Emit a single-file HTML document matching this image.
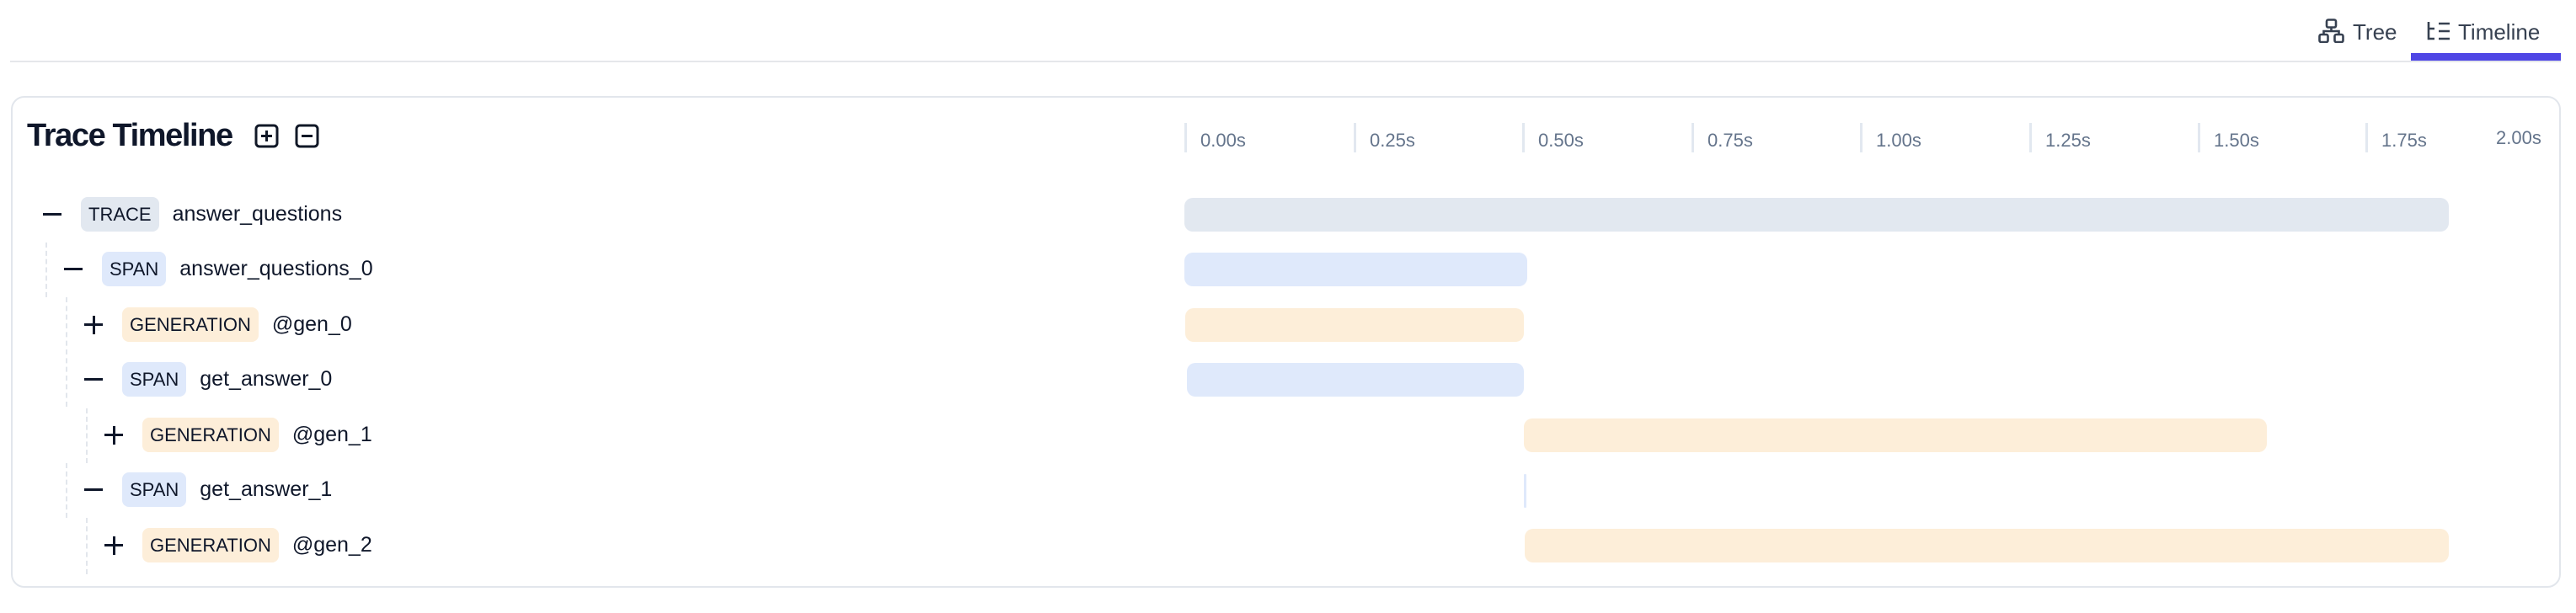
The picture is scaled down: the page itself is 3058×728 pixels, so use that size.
<!DOCTYPE html>
<html><head><meta charset="utf-8"><style>
*{margin:0;padding:0;box-sizing:border-box}
body{width:3058px;height:728px;background:#fff;font-family:"Liberation Sans",Arial,sans-serif;position:relative;overflow:hidden;color:#0f172a}
.a{position:absolute}
.hl{left:12px;width:3028px;top:72px;height:2px;background:#e5e7eb}
.tab{top:21px;font-size:26px;color:#374151;line-height:34px}
.card{left:13px;top:114px;width:3027px;height:584px;border:2px solid #e2e6ec;border-radius:16px}
.title{left:32px;top:140px;font-size:38px;font-weight:bold;letter-spacing:-1.4px;line-height:42px}
.tick{top:146px;width:3px;height:35px;background:#e2e8f0}
.tl{top:155px;font-size:22px;color:#64748b;line-height:24px}
.row{height:41px;display:flex;align-items:center}
.tg{width:22px;height:22px;position:relative;margin-right:23px}
.tg:before{content:"";position:absolute;left:0;top:9.5px;width:22px;height:3px;background:#0f172a}
.tg.p:after{content:"";position:absolute;left:9.5px;top:0;width:3px;height:22px;background:#0f172a}
.bd{height:41px;line-height:41px;font-size:22px;padding:0 9px;border-radius:8px;margin-right:16px}
.tr{background:#e2e8f0}.sp{background:#dfe9fb}.ge{background:#fdeed9}
.nm{font-size:25px}
.bar{height:40px;border-radius:10px}
.dl{width:0;border-left:2px dashed #e2e6ec}
</style></head><body>
<div class="a hl"></div>
<div class="a" style="left:2862px;top:63px;width:178px;height:9px;background:#4f46e5"></div>
<svg class="a" style="left:2752px;top:22px" width="31" height="29" viewBox="0 0 31 29" fill="none" stroke="#374151" stroke-width="2.6"><rect x="10" y="1.5" width="11" height="9" rx="2"/><rect x="1.5" y="19" width="10" height="9" rx="2"/><rect x="19.5" y="19" width="10" height="9" rx="2"/><path d="M15.5 10.5V15M6.5 19V15H24.5V19"/></svg>
<div class="a tab" style="left:2793px">Tree</div>
<svg class="a" style="left:2880px;top:24px" width="30" height="26" viewBox="0 0 30 26" fill="none" stroke="#374151" stroke-width="2.6"><path d="M3 2V22H10M3 10H10M15 4H28M15 13H28M15 22H28"/></svg>
<div class="a tab" style="left:2918px">Timeline</div>

<div class="a card"></div>
<div class="a title">Trace Timeline</div>
<svg class="a" style="left:302px;top:147px" width="78" height="29" viewBox="0 0 78 29" fill="none" stroke="#111827" stroke-width="3"><rect x="2" y="2" width="25" height="25" rx="4"/><path d="M14.5 8V21M8 14.5H21"/><rect x="50" y="2" width="25" height="25" rx="4"/><path d="M56 14.5H69"/></svg>

<div class="a tick" style="left:1406px"></div><div class="a tl" style="left:1425px">0.00s</div>
<div class="a tick" style="left:1607px"></div><div class="a tl" style="left:1626px">0.25s</div>
<div class="a tick" style="left:1807px"></div><div class="a tl" style="left:1826px">0.50s</div>
<div class="a tick" style="left:2008px"></div><div class="a tl" style="left:2027px">0.75s</div>
<div class="a tick" style="left:2208px"></div><div class="a tl" style="left:2227px">1.00s</div>
<div class="a tick" style="left:2409px"></div><div class="a tl" style="left:2428px">1.25s</div>
<div class="a tick" style="left:2609px"></div><div class="a tl" style="left:2628px">1.50s</div>
<div class="a tick" style="left:2808px"></div><div class="a tl" style="left:2827px">1.75s</div>
<div class="a tl" style="left:2963px;top:152px">2.00s</div>

<div class="a dl" style="left:54px;top:288px;height:65px"></div>
<div class="a dl" style="left:78px;top:353px;height:130px"></div>
<div class="a dl" style="left:102px;top:485px;height:65px"></div>
<div class="a dl" style="left:78px;top:550px;height:65px"></div>
<div class="a dl" style="left:102px;top:615px;height:67px"></div>

<div class="a row" style="left:51px;top:234px"><div class="tg"></div><div class="bd tr">TRACE</div><div class="nm">answer_questions</div></div>
<div class="a row" style="left:76px;top:299px"><div class="tg"></div><div class="bd sp">SPAN</div><div class="nm">answer_questions_0</div></div>
<div class="a row" style="left:100px;top:365px"><div class="tg p"></div><div class="bd ge">GENERATION</div><div class="nm">@gen_0</div></div>
<div class="a row" style="left:100px;top:430px"><div class="tg"></div><div class="bd sp">SPAN</div><div class="nm">get_answer_0</div></div>
<div class="a row" style="left:124px;top:496px"><div class="tg p"></div><div class="bd ge">GENERATION</div><div class="nm">@gen_1</div></div>
<div class="a row" style="left:100px;top:561px"><div class="tg"></div><div class="bd sp">SPAN</div><div class="nm">get_answer_1</div></div>
<div class="a row" style="left:124px;top:627px"><div class="tg p"></div><div class="bd ge">GENERATION</div><div class="nm">@gen_2</div></div>

<div class="a bar tr" style="left:1406px;top:235px;width:1501px"></div>
<div class="a bar sp" style="left:1406px;top:300px;width:407px"></div>
<div class="a bar ge" style="left:1407px;top:366px;width:402px"></div>
<div class="a bar sp" style="left:1409px;top:431px;width:400px"></div>
<div class="a bar ge" style="left:1809px;top:497px;width:882px"></div>
<div class="a" style="left:1809px;top:563px;width:3px;height:40px;background:#dfe9fb;border-radius:1px"></div>
<div class="a bar ge" style="left:1810px;top:628px;width:1097px"></div>
</body></html>
